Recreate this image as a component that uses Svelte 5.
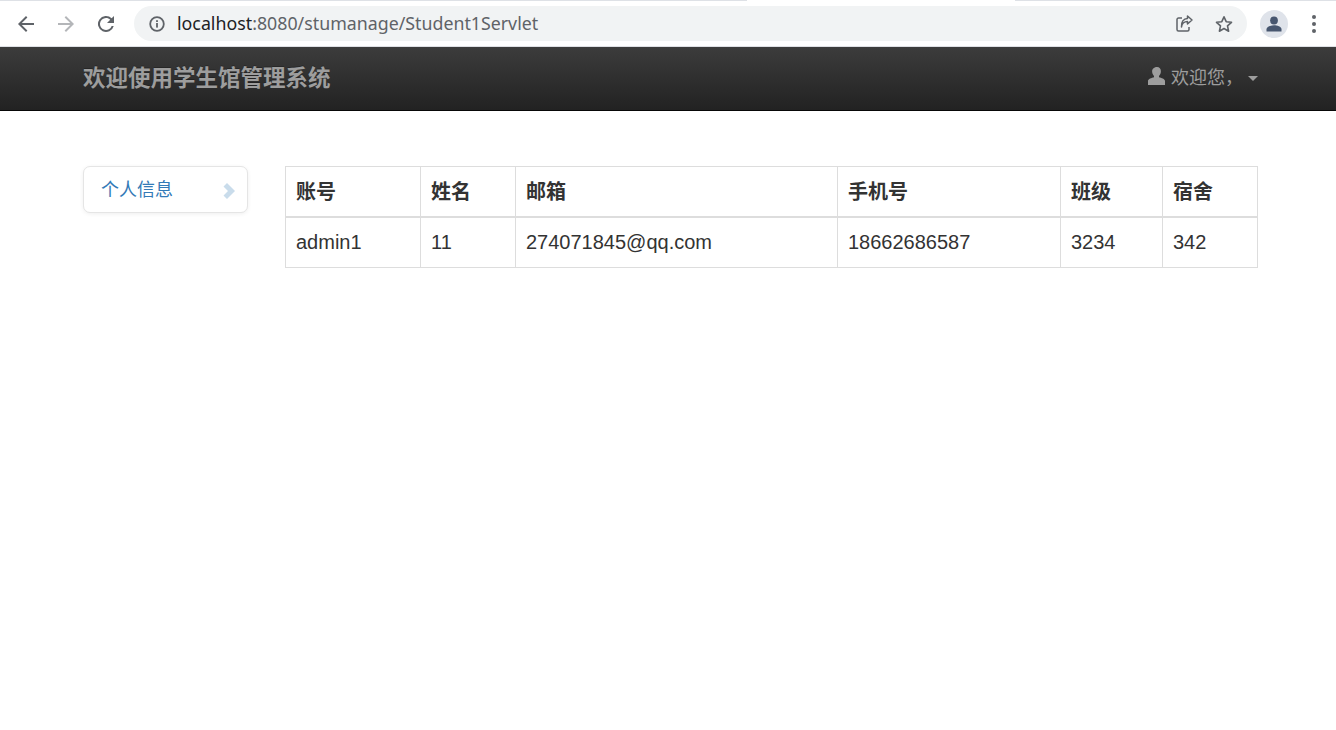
<script lang="ts">
	const columns = [
		{ title: '账号', value: 'admin1', width: 135 },
		{ title: '姓名', value: '11', width: 95 },
		{ title: '邮箱', value: '274071845@qq.com', width: 322 },
		{ title: '手机号', value: '18662686587', width: 223 },
		{ title: '班级', value: '3234', width: 102 },
		{ title: '宿舍', value: '342', width: 95 }
	];
</script>

<div class="browser">
	<div class="tabstrip"><span class="tab"></span></div>
	<div class="toolbar">
		<button class="tool" aria-label="back">
			<svg width="24" height="24" viewBox="0 0 24 24"><path d="M20 11H7.800l5.600-5.600L12 4l-8 8 8 8 1.400-1.400L7.800 13H20z" fill="#5f6368" /></svg>
		</button>
		<button class="tool" aria-label="forward">
			<svg width="24" height="24" viewBox="0 0 24 24"><path d="M4 11h12.200l-5.600-5.600L12 4l8 8-8 8-1.400-1.400 5.600-5.600H4z" fill="#b4b6b9" /></svg>
		</button>
		<button class="tool" aria-label="reload">
			<svg width="24" height="24" viewBox="0 0 24 24"><path d="M17.650 6.350A8 8 0 1 0 19.730 14h-2.080A6 6 0 1 1 12 6c1.660 0 3.140.69 4.220 1.780L13 11h7V4z" fill="#5f6368" /></svg>
		</button>
		<div class="omnibox">
			<svg class="info" width="18" height="18" viewBox="0 0 18 18">
				<circle cx="9" cy="9" r="6.800" fill="none" stroke="#5f6368" stroke-width="1.800" />
				<rect x="8.100" y="8" width="1.800" height="4.600" fill="#5f6368" />
				<rect x="8.100" y="5.200" width="1.800" height="1.800" fill="#5f6368" />
			</svg>
			<span class="url"><span class="host">localhost</span>:8080/stumanage/Student1Servlet</span>
			<svg class="share" width="20" height="20" viewBox="0 0 20 20" fill="none" stroke="#5f6368" stroke-width="1.500">
				<path d="M8 4H4.500A1.500 1.500 0 0 0 3 5.500v10A1.500 1.500 0 0 0 4.500 17h9a1.500 1.500 0 0 0 1.500-1.500V13" />
				<path d="M7.500 13c.3-3.500 3-5.500 6-5.500V10L18 6l-4.500-4v2.500C9.500 4.500 7 8 7.500 13z" stroke-linejoin="round" />
			</svg>
			<svg class="star" width="20" height="20" viewBox="0 0 20 20">
				<path d="M10 2.800l2.200 4.900 5.300.6-4 3.600 1.100 5.300L10 14.500l-4.600 2.700 1.100-5.300-4-3.600 5.300-.6z" fill="none" stroke="#5f6368" stroke-width="1.600" stroke-linejoin="round" />
			</svg>
		</div>
		<div class="avatar">
			<svg width="18" height="18" viewBox="0 0 18 18" fill="#47566f">
				<circle cx="9" cy="5.500" r="3.900" />
				<path d="M1.500 16.500v-2.200c0-2.700 4.500-4 7.500-4s7.500 1.300 7.500 4v2.200z" />
			</svg>
		</div>
		<div class="kebab"><i></i><i></i><i></i></div>
	</div>
</div>

<nav class="navbar">
	<span class="brand">欢迎使用学生馆管理系统</span>
	<div class="user">
		<svg width="18" height="18" viewBox="0 0 18 18" fill="#9d9d9d">
			<path d="M9 0c2.500 0 3.900 1.800 3.900 4.300 0 2-.9 3.700-1.900 4.600v1.400c2.300.7 6 1.700 6 3.700V18H0v-4c0-2 3.700-3 6-3.700V8.900C5 8 4.100 6.300 4.100 4.300 4.100 1.800 6.500 0 9 0z" />
		</svg>
		<span>欢迎您，</span>
		<i class="caret"></i>
	</div>
</nav>

<main class="content">
	<aside class="side">
		<a class="side-link" href="#info">
			<span>个人信息</span>
			<svg class="chevron" width="12" height="16" viewBox="0 0 12 16"><path d="M4 0l8 8-8 8-3.500-3.500L5 8 .5 3.500z" fill="#c9dceb" /></svg>
		</a>
	</aside>
	<table class="grid">
		<thead>
			<tr>
				{#each columns as col}
					<th style="width: {col.width}px">{col.title}</th>
				{/each}
			</tr>
		</thead>
		<tbody>
			<tr>
				{#each columns as col}
					<td>{col.value}</td>
				{/each}
			</tr>
		</tbody>
	</table>
</main>

<style>
	:global(body) {
		background: #fff;
		font-family: 'Liberation Sans', 'Noto Sans CJK SC', sans-serif;
		color: #333;
	}

	.browser {
		height: 47px;
		background: #fff;
		box-sizing: border-box;
		border-bottom: 1px solid #dfe1e5;
	}

	.tabstrip {
		height: 1px;
		background: #dee1e6;
		display: flex;
		justify-content: flex-end;
	}

	.tab {
		width: 268px;
		background: #fff;
		margin-right: 321px;
	}

	.toolbar {
		height: 45px;
		display: flex;
		align-items: center;
		padding-left: 6px;
	}

	.tool {
		width: 40px;
		height: 34px;
		padding: 0;
		border: 0;
		background: none;
		display: flex;
		align-items: center;
		justify-content: center;
	}

	.omnibox {
		width: 1113px;
		height: 35px;
		margin-left: 8px;
		border-radius: 18px;
		background: #f1f3f4;
		display: flex;
		align-items: center;
		padding: 0 13px;
		box-sizing: border-box;
	}

	.info {
		margin-left: 0.5px;
	}

	.url {
		margin-left: 11.5px;
		margin-bottom: 2px;
		flex: 1;
		font-family: 'Noto Sans', 'Open Sans', sans-serif;
		font-size: 17.8px;
		color: #5f6368;
		white-space: nowrap;
	}

	.host {
		color: #202124;
	}

	.star {
		margin-left: 20px;
	}

	.avatar {
		width: 28px;
		height: 28px;
		margin-left: 13px;
		border-radius: 50%;
		background: #dfe3ea;
		display: flex;
		align-items: center;
		justify-content: center;
	}

	.kebab {
		margin-left: 24px;
		display: flex;
		flex-direction: column;
		gap: 3px;
	}

	.kebab i {
		width: 4px;
		height: 4px;
		border-radius: 50%;
		background: #5f6368;
	}

	.navbar {
		height: 64px;
		box-sizing: border-box;
		padding: 0 78px 5px 83px;
		display: flex;
		align-items: center;
		justify-content: space-between;
		background: linear-gradient(to bottom, #3c3c3c, #222);
		border-bottom: 1px solid #080808;
	}

	.brand {
		font-size: 22.5px;
		font-weight: 700;
		color: #9d9d9d;
		text-shadow: 0 -1px 0 rgba(0, 0, 0, 0.25);
	}

	.user {
		display: flex;
		align-items: center;
		font-size: 18px;
		color: #9d9d9d;
	}

	.user svg {
		margin-left: -1px;
		margin-top: -1px;
	}

	.user span {
		margin-left: 5px;
		width: 73px;
	}

	.caret {
		margin-left: 4px;
		margin-top: 5px;
		border-top: 5px solid #9d9d9d;
		border-left: 5px solid transparent;
		border-right: 5px solid transparent;
	}

	.content {
		display: flex;
		align-items: flex-start;
		padding: 55px 78px 0 83px;
	}

	.side {
		width: 165px;
		margin-right: 37px;
		flex-shrink: 0;
	}

	.side-link {
		height: 47px;
		box-sizing: border-box;
		display: flex;
		align-items: center;
		justify-content: space-between;
		padding: 0 12px 4px 17px;
		background: #fff;
		border: 1px solid #e5e5e5;
		border-radius: 7px;
		box-shadow: 0 1px 4px rgba(0, 0, 0, 0.065);
		color: #337ab7;
		font-size: 18px;
		text-decoration: none;
	}

	.chevron {
		margin-top: 6px;
	}

	.grid {
		width: 973px;
		table-layout: fixed;
		border-collapse: collapse;
		font-size: 20px;
		line-height: 29px;
	}

	.grid th,
	.grid td {
		box-sizing: border-box;
		padding: 10px;
		border: 1px solid #ddd;
		text-align: left;
	}

	.grid th {
		padding: 11px 10px 9px;
		font-weight: 700;
		border-bottom-width: 2px;
	}
</style>
